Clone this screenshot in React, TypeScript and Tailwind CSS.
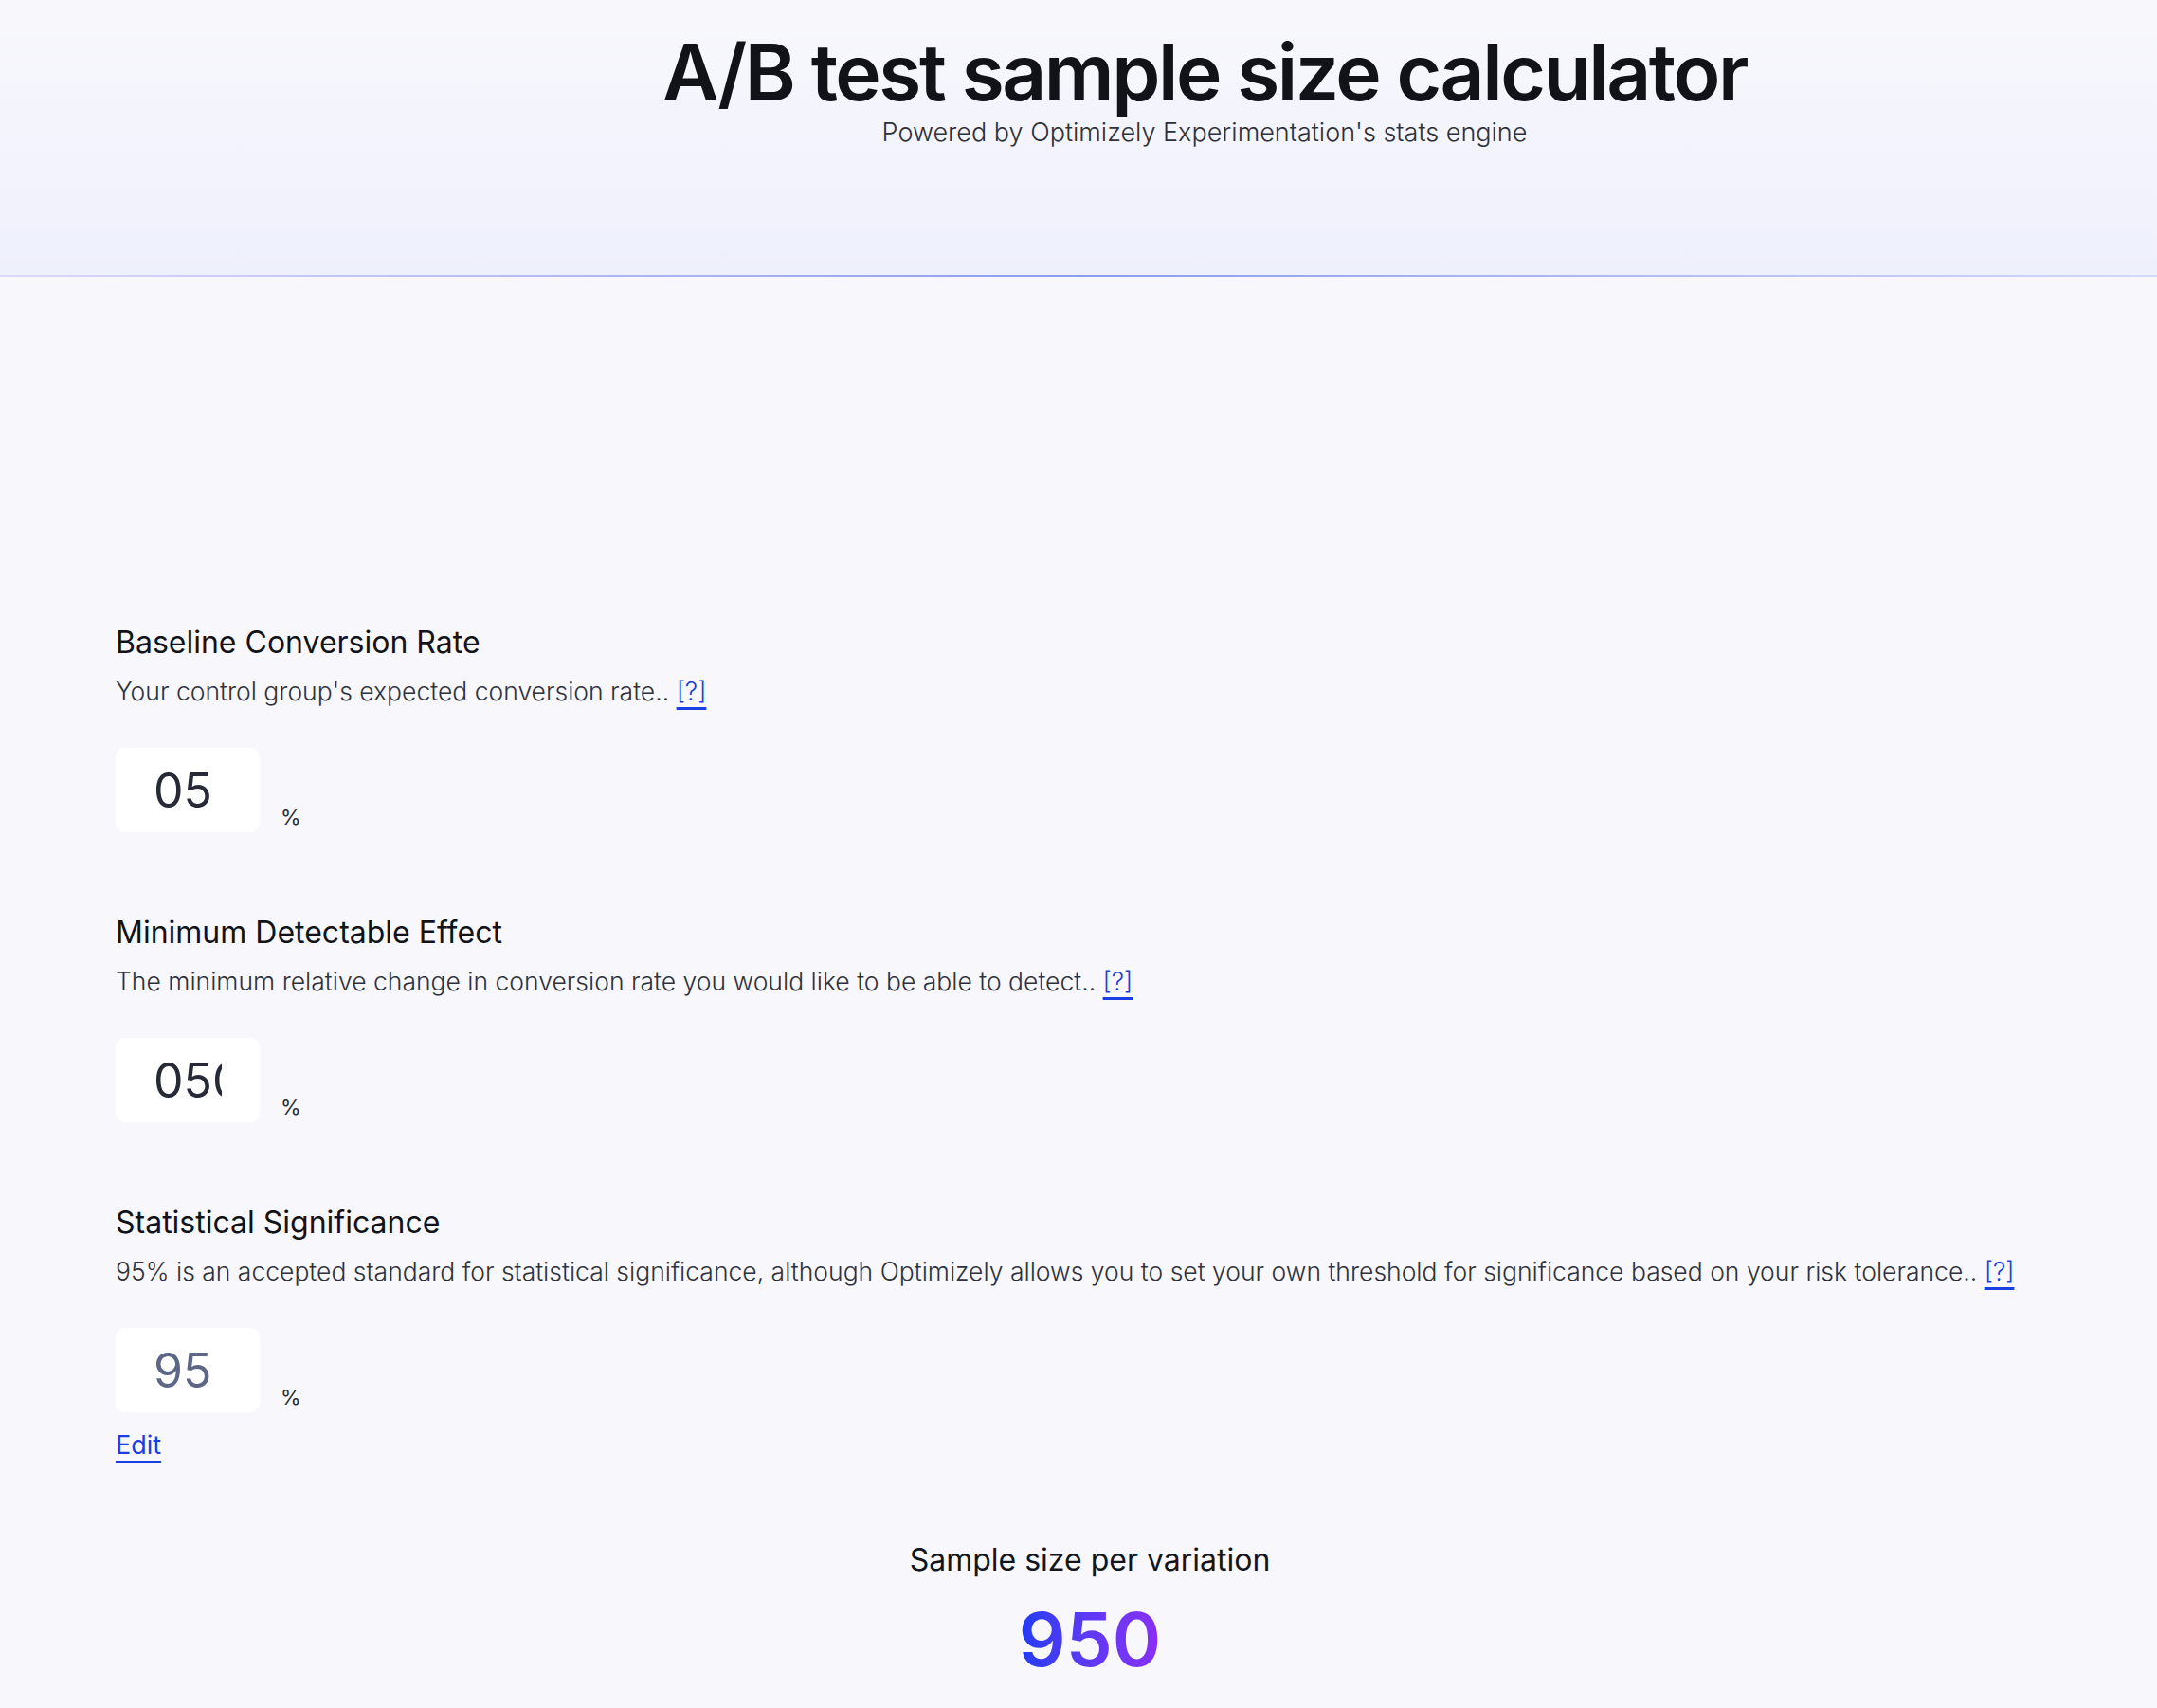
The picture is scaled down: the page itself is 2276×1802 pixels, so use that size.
import { ReactNode } from "react";

interface FieldProps {
  title: string;
  desc: string;
  value: string;
  muted?: boolean;
  children?: ReactNode;
}

function Field({ title, desc, value, muted, children }: FieldProps) {
  return (
    <section className="flex flex-col">
      <h2 className="text-[32px] leading-[40px] font-normal text-[#111319]">{title}</h2>
      <p className="mt-[13px] text-[26.5px] leading-[36px] font-light text-[#2f323c]">
        {desc}{" "}
        <a href="#" className="text-[#1a3fe0] underline decoration-[3px] underline-offset-[7px]">
          [?]
        </a>
      </p>
      <div className="mt-[42px] flex items-end gap-[22px]">
        <input
          readOnly
          value={value}
          className={`w-[152px] h-[89px] rounded-[10px] bg-white px-10 text-[50px] outline-none ${
            muted ? "text-[#5d6686]" : "text-[#272a36]"
          }`}
        />
        <span className="pb-[2px] text-[22px] leading-[28px] text-[#2a2d36]">%</span>
      </div>
      {children}
    </section>
  );
}

export default function App() {
  return (
    <div className="min-h-screen bg-[#f8f8fc] font-['Inter','Noto_Sans',sans-serif]">
      {/* Hero header */}
      <header className="h-[290px] bg-gradient-to-b from-[#f8f8fc] to-[#eef0fc] pl-[266px] pt-[30px] text-center">
        <h1 className="text-[82px] leading-[94px] font-semibold tracking-[-0.03em] text-[#111318]">
          A/B test sample size calculator
        </h1>
        <p className="text-[27px] leading-[32px] font-light text-[#2e3038]">
          Powered by Optimizely Experimentation's stats engine
        </p>
      </header>
      <div className="h-[2px] bg-gradient-to-r from-[#dcd8fa] via-[#8c9cf0] to-[#d4d8f8]" />

      <main className="px-[122px] pt-[366px] pb-[40px]">
        <div className="flex flex-col gap-[86px]">
          <Field title="Baseline Conversion Rate" desc="Your control group's expected conversion rate.." value="05" />
          <Field
            title="Minimum Detectable Effect"
            desc="The minimum relative change in conversion rate you would like to be able to detect.."
            value="050"
          />
          <Field
            title="Statistical Significance"
            desc="95% is an accepted standard for statistical significance, although Optimizely allows you to set your own threshold for significance based on your risk tolerance.."
            value="95"
            muted
          >
            <a href="#" className="mt-[18px] self-start text-[27px] leading-[34px] text-[#1a3fe0] underline decoration-[3px] underline-offset-[7px]">
              Edit
            </a>
          </Field>
        </div>

        <div className="mt-[84px] pl-[24px] text-center">
          <p className="text-[32px] leading-[40px] text-[#13151c]">Sample size per variation</p>
          <p className="mt-[20px] inline-block bg-gradient-to-r from-[#1c3cf4] to-[#8a2df6] bg-clip-text text-[78px] leading-[88px] font-semibold text-transparent">
            950
          </p>
        </div>
      </main>
    </div>
  );
}
